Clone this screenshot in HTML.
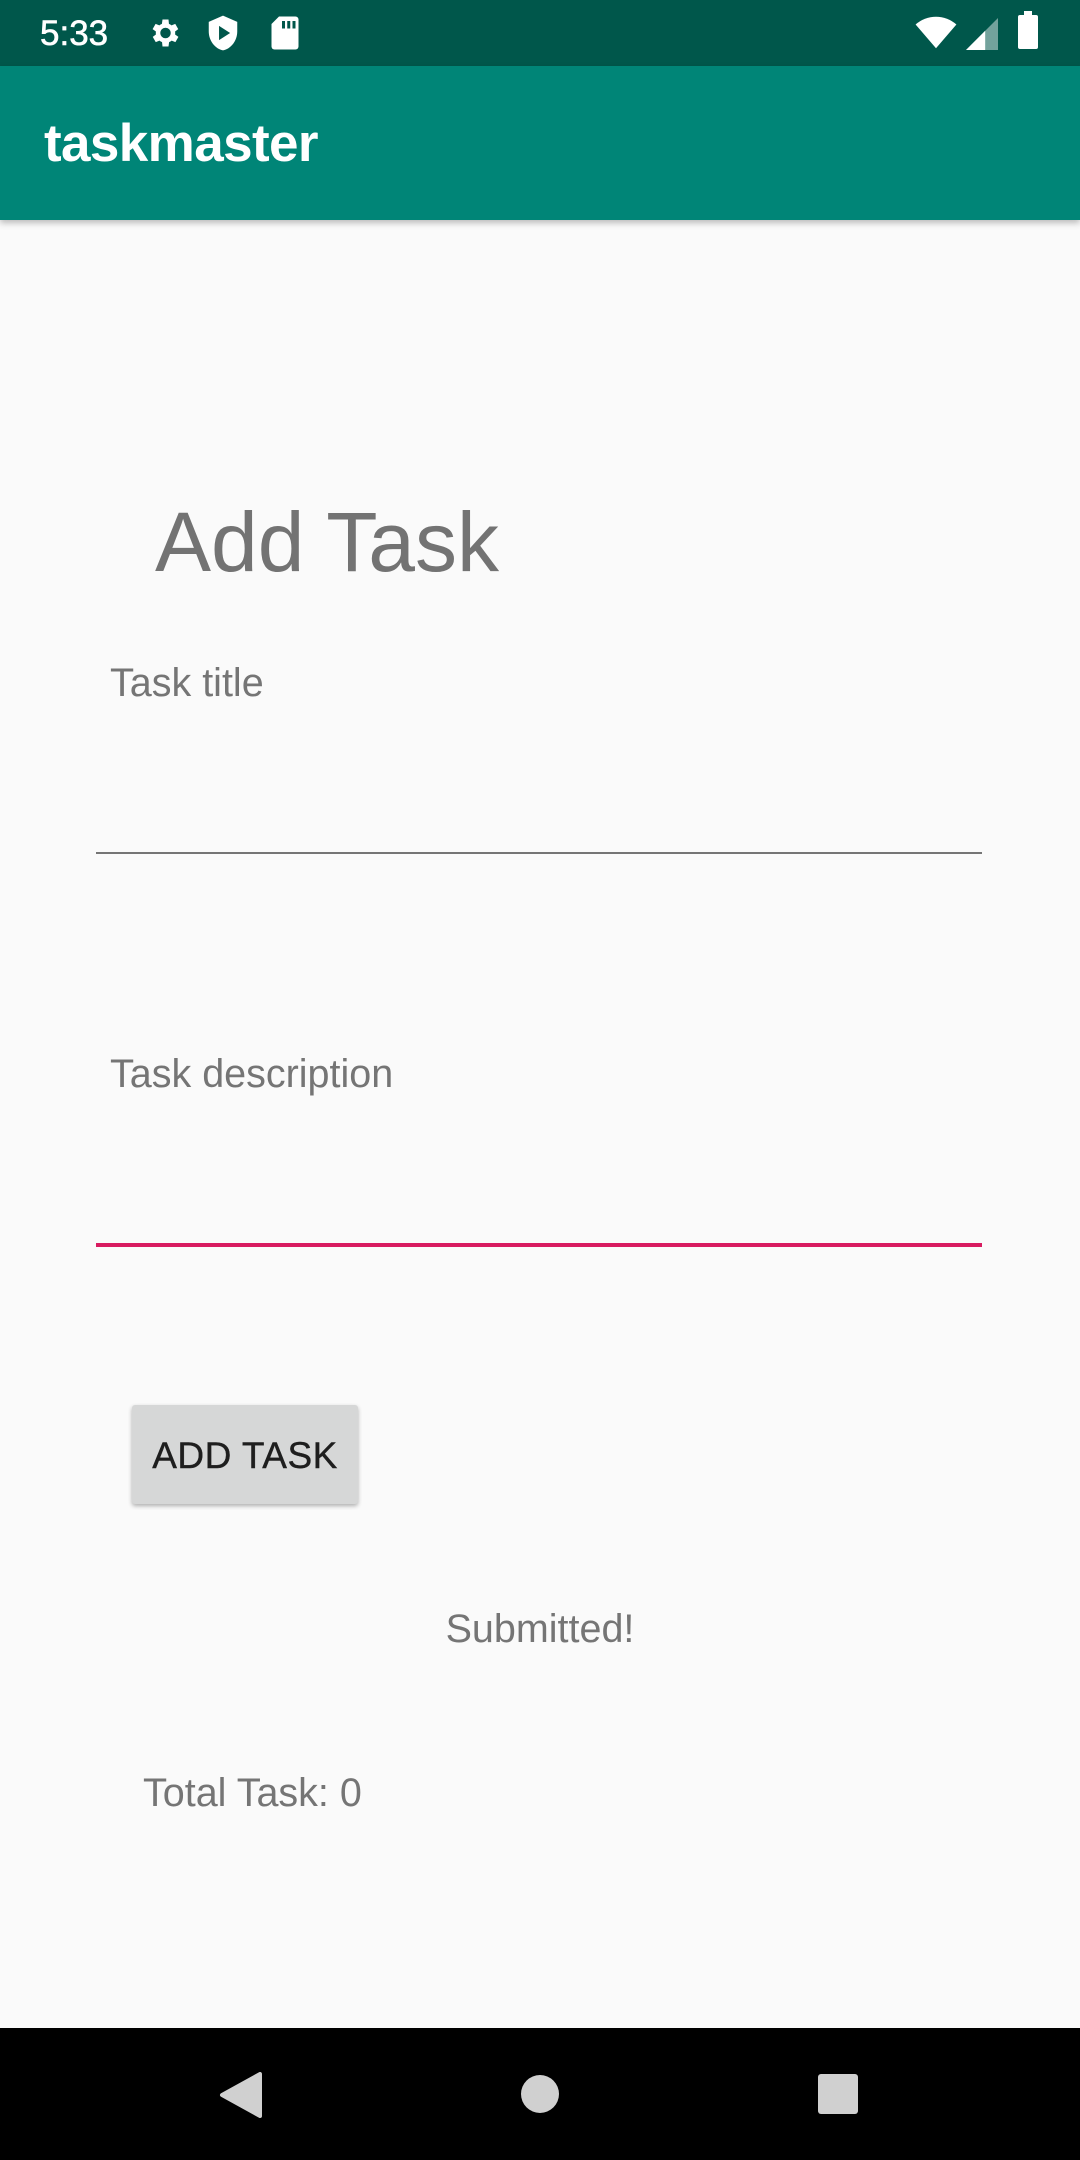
<!DOCTYPE html>
<html><head><meta charset="utf-8"><style>
html,body{margin:0;padding:0;width:1080px;height:2160px;background:#fafafa;font-family:"Liberation Sans",sans-serif;overflow:hidden;position:relative}
.abs{position:absolute}
</style></head><body>
<div class="abs" style="left:0;top:0;width:1080px;height:66px;background:#00574b"></div>
<div class="abs" style="left:40px;top:13px;font-size:35px;color:#fff;line-height:42px;-webkit-text-stroke:0.6px #fff">5:33</div>
<svg class="abs" style="left:146px;top:15px" width="36" height="36" viewBox="0 0 24 24"><path fill="#fff" d="M19.4 13a7.5 7.5 0 0 0 0-2l2.1-1.6-2-3.5-2.5 1a7 7 0 0 0-1.7-1L15 3h-4l-.4 2.9a7 7 0 0 0-1.7 1l-2.5-1-2 3.5L6.6 11a7.5 7.5 0 0 0 0 2l-2.1 1.6 2 3.5 2.5-1a7 7 0 0 0 1.7 1L11 21h4l.4-2.9a7 7 0 0 0 1.7-1l2.5 1 2-3.5zM13 15.5A3.5 3.5 0 1 1 13 8.5a3.5 3.5 0 0 1 0 7z"/></svg>
<svg class="abs" style="left:207px;top:14px" width="32" height="38" viewBox="0 0 20 24"><path fill="#fff" d="M10 1 1 5v6c0 6 4 11 9 12 5-1 9-6 9-12V5z"/><path fill="#00574b" d="M7.5 7.5v9l7-4.5z"/></svg>
<svg class="abs" style="left:270px;top:15px" width="30" height="36" viewBox="0 0 20 24"><path fill="#fff" d="M6 1h11a2 2 0 0 1 2 2v18a2 2 0 0 1-2 2H3a2 2 0 0 1-2-2V6z"/><path fill="#00574b" d="M8 4h2v5H8zM11.5 4h2v5h-2zM15 4h2v5h-2z"/></svg>
<svg class="abs" style="left:915px;top:16px" width="42" height="34" viewBox="0 0 24 20"><path fill="#fff" d="M12 19 0 5a18 18 0 0 1 24 0z"/></svg>
<svg class="abs" style="left:965px;top:18px" width="34" height="32" viewBox="0 0 20 20"><path fill="#fff" d="M0 20 20 0v20z" opacity=".45"/><path fill="#fff" d="M0 20 12 8v12z"/></svg>
<div class="abs" style="left:1018px;top:15px;width:20px;height:34px;background:#fff;border-radius:2px"></div>
<div class="abs" style="left:1024px;top:11px;width:8px;height:5px;background:#fff"></div>

<div class="abs" style="left:0;top:66px;width:1080px;height:154px;background:#008577;box-shadow:0 3px 6px rgba(0,0,0,.25)"></div>
<div class="abs" style="left:44px;top:114px;font-size:53px;color:#fff;line-height:60px;font-weight:bold;letter-spacing:-0.6px">taskmaster</div>

<div class="abs" style="left:155px;top:492px;font-size:84px;color:#737373;line-height:100px">Add Task</div>
<div class="abs" style="left:110px;top:660px;font-size:39.5px;color:#757575;line-height:46px">Task title</div>
<div class="abs" style="left:96px;top:852px;width:886px;height:2px;background:#757575"></div>
<div class="abs" style="left:110px;top:1051px;font-size:39.5px;color:#757575;line-height:46px">Task description</div>
<div class="abs" style="left:96px;top:1243px;width:886px;height:4px;background:#d81b60"></div>

<div class="abs" style="left:132px;top:1405px;width:226px;height:99px;background:#d6d7d7;border-radius:3px;box-shadow:0 2px 4px rgba(0,0,0,.3);font-size:37px;color:#1e1e1e;line-height:101px;text-align:center;letter-spacing:0.5px;-webkit-text-stroke:0.4px #1e1e1e">ADD TASK</div>

<div class="abs" style="left:0;top:1606px;width:1080px;text-align:center;font-size:39.5px;color:#757575;line-height:46px">Submitted!</div>
<div class="abs" style="left:143px;top:1770px;font-size:39.5px;color:#757575;line-height:46px">Total Task: 0</div>

<div class="abs" style="left:0;top:2028px;width:1080px;height:132px;background:#000"></div>
<svg class="abs" style="left:218px;top:2072px" width="44" height="46" viewBox="0 0 22 23"><path fill="#d0d0d0" d="M21 1v21L2 11.5z" stroke="#d0d0d0" stroke-linejoin="round" stroke-width="2"/></svg>
<div class="abs" style="left:521px;top:2075px;width:38px;height:38px;border-radius:50%;background:#d0d0d0"></div>
<div class="abs" style="left:818px;top:2074px;width:40px;height:40px;border-radius:3px;background:#d0d0d0"></div>
</body></html>
